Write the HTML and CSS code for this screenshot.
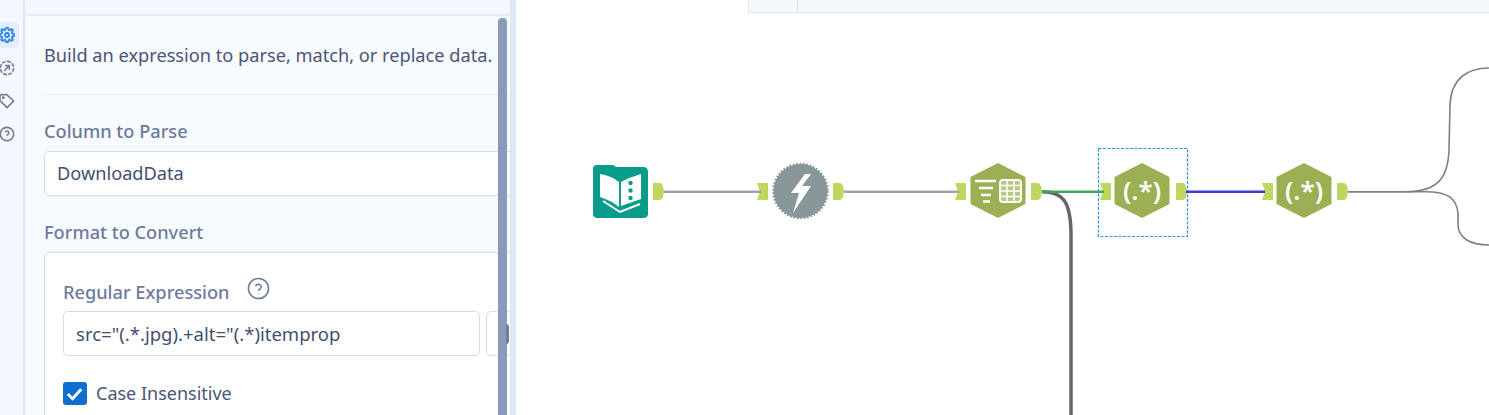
FILE: index.html
```html
<!DOCTYPE html>
<html lang="en">
<head>
    <meta charset="UTF-8">
    <title>Workflow - RegEx tool</title>
    <link rel="stylesheet" href="styles.css">
</head>
<body>
    <div class="app">
        <!-- Icon rail -->
        <nav class="rail">
            <div class="rail-btn active">
                <svg viewBox="0 0 24 24" class="rail-icon"><circle cx="12" cy="12" r="3"/><path d="M19.4 15a1.7 1.7 0 0 0 .3 1.8l.1.1a2 2 0 1 1-2.8 2.8l-.1-.1a1.7 1.7 0 0 0-2.9 1.2V21a2 2 0 1 1-4 0v-.1a1.7 1.7 0 0 0-2.9-1.2l-.1.1a2 2 0 1 1-2.8-2.8l.1-.1a1.7 1.7 0 0 0-1.2-2.9H3a2 2 0 1 1 0-4h.1a1.7 1.7 0 0 0 1.2-2.9l-.1-.1a2 2 0 1 1 2.8-2.8l.1.1a1.7 1.7 0 0 0 1.9.3H9a1.7 1.7 0 0 0 1-1.5V3a2 2 0 1 1 4 0v.1a1.7 1.7 0 0 0 2.9 1.2l.1-.1a2 2 0 1 1 2.8 2.8l-.1.1a1.7 1.7 0 0 0 1.2 2.9h.1a2 2 0 1 1 0 4h-.1a1.7 1.7 0 0 0-1.5 1z"/></svg>
            </div>
            <div class="rail-btn">
                <svg viewBox="0 0 24 24" class="rail-icon"><circle cx="12" cy="12" r="10" stroke-dasharray="6 1.800"/><path d="M8 16l7-7M9.500 8.500h6V14.500"/></svg>
            </div>
            <div class="rail-btn">
                <svg viewBox="0 0 24 24" class="rail-icon"><path d="M11.500 2.500H4Q1.500 2.500 1.500 5v6.500l10.500 10.500 10-10z"/><circle cx="6.500" cy="7" r="1"/></svg>
            </div>
            <div class="rail-btn">
                <svg viewBox="0 0 24 24" class="rail-icon"><circle cx="12" cy="12" r="10"/><path d="M9 9.500a3 3 0 0 1 5.800 1c0 2-2.800 2.300-2.800 4M12 17.500v.5"/></svg>
            </div>
        </nav>

        <!-- Config panel -->
        <section class="panel">
            <div class="panel-top"></div>
            <div class="panel-body">
                <p class="desc">Build an expression to parse, match, or replace data.</p>
                <hr class="rule">
                <div class="label">Column to Parse</div>
                <div class="field">DownloadData</div>
                <div class="label label-format">Format to Convert</div>
                <div class="card">
                    <div class="label-row">
                        <span class="label">Regular Expression</span>
                        <svg viewBox="0 0 24 24" class="help"><circle cx="12" cy="12" r="10.500"/><path d="M9 9.500a3 3 0 0 1 5.800 1c0 2-2.800 2.300-2.800 4M12 17.500v.5"/></svg>
                    </div>
                    <div class="regex-row">
                        <div class="field regex">src="(.*.jpg).+alt="(.*)itemprop</div>
                        <div class="field insert"></div>
                    </div>
                    <div class="check-row">
                        <span class="check">
                            <svg viewBox="0 0 24 24"><path d="M5 12.500l5 5 9-10"/></svg>
                        </span>
                        <span>Case Insensitive</span>
                    </div>
                </div>
            </div>
            <div class="scrollbar"></div>
            <div class="grip"></div>
        </section>

        <div class="splitter"></div>

        <!-- Workflow canvas -->
        <main class="canvas">
            <div class="toolbar">
                <div class="tool-cell"></div>
                <div class="tool-rest"></div>
            </div>
            <svg class="flow" viewBox="516 0 973 415">
                <defs>
                    <path id="out" d="M653 183h7Q662 183 663 186L664 191.500L663 197Q662 200 660 200h-7z"/>
                    <path id="in" d="M757 183h11v17h-11l3-8.500z"/>
                    <path id="hex" d="M27.500 0L55 14V41L27.500 55L0 41V14z"/>
                    <g id="regex">
                        <use href="#hex"/>
                        <text x="27.500" y="37" class="rx">(.*)</text>
                    </g>
                </defs>

                <!-- input -->
                <path class="book-bg" d="M597 165H612Q615 165 616 167H643Q648 167 648 172V214Q648 218 643 218H598Q593 218 593 214V169Q593 165 597 165z"/>
                <path class="book-w" d="M600 174Q612 176 619 182V207Q612 201 600 197z"/>
                <path class="book-w" d="M621 182Q630 177 641 174V199L621 206z"/>
                <path class="book-line" d="M603 201L620 212L640 204"/>
                <circle class="book-dot" cx="630.500" cy="183" r="2.200"/>
                <circle class="book-dot" cx="630.500" cy="190.500" r="2.200"/>
                <circle class="book-dot" cx="630.500" cy="198" r="2.200"/>
                <use href="#out" class="anchor"/>

                <!-- download -->
                <use href="#in" class="anchor"/>
                <circle cx="800.500" cy="191" r="27" class="zap-bg"/>
                <circle cx="800.500" cy="191" r="27" class="zap-edge"/>
                <path class="zap-bolt" d="M805 174L791 193H799L793 213L811 186H802L811 174z"/>
                <use href="#out" class="anchor" x="180"/>

                <!-- text to columns -->
                <use href="#in" class="anchor" x="198"/>
                <use href="#hex" class="hex" x="970.500" y="163"/>
                <path class="filter" d="M975 181H996M979 188H993M981 195H991M983 201.500H990"/>
                <rect x="1000" y="180" width="21" height="22" rx="3" class="tbl"/>
                <path class="tbl-grid" d="M1000 185.500H1021M1000 191H1021M1000 196.500H1021M1007 180V202M1014 180V202"/>
                <use href="#out" class="anchor" x="378"/>

                <!-- regex, selected -->
                <rect x="1098.500" y="148.500" width="89" height="88" class="select"/>
                <use href="#in" class="anchor" x="343"/>
                <use href="#regex" class="hex" x="1114.500" y="163"/>
                <use href="#out" class="anchor" x="523"/>

                <!-- regex -->
                <use href="#in" class="anchor" x="505"/>
                <use href="#regex" class="hex" x="1276.500" y="163"/>
                <use href="#out" class="anchor" x="684"/>

                <!-- connections -->
                <path class="wire" d="M664 191.700H761"/>
                <path class="wire" d="M844 191.700H959"/>
                <path class="wire-thick" d="M1042 191.700C1062 191.700 1071 200 1071 235V415"/>
                <path class="wire-green" d="M1042 191.700H1104"/>
                <path class="wire-blue" d="M1186 191.700H1265"/>
                <path class="wire-thin" d="M1348 191.700H1405C1438 191.700 1448 178 1449 150L1450 105C1451 78 1468 68 1489 68"/>
                <path class="wire-thin" d="M1348 191.700H1425C1448 191.700 1457 198 1458 214V224C1458 238 1470 245 1489 245"/>
            </svg>
        </main>
    </div>
</body>
</html>
```

FILE: styles.css
```css
html, body {
    margin: 0;
    height: 100%;
    overflow: hidden;
}
body {
    font-family: "Noto Sans", Arial, sans-serif;
    font-size: 18.200px;
    background-color: #ffffff;
}
.app {
    display: flex;
    height: 415px;
}

/* rail */
.rail {
    flex: 0 0 25px;
    box-sizing: border-box;
    padding-top: 22px;
    background-color: #f5f8ff;
    border-right: 2px solid #dde4f3;
    overflow: hidden;
}
.rail-btn {
    width: 20px;
    height: 33px;
    margin-left: -1px;
    display: flex;
    justify-content: center;
    padding-right: 4px;
    box-sizing: border-box;
    align-items: center;
}
.rail-btn.active {
    height: 26px;
    margin-bottom: 3px;
    background-color: #e2edff;
    border-radius: 0 4px 4px 0;
}
.rail-icon {
    width: 16px;
    height: 16px;
    flex: none;
    fill: none;
    stroke: #737d93;
    stroke-width: 2.400;
}
.active .rail-icon {
    stroke: #2f86e8;
    stroke-width: 2.800;
}

/* panel */
.panel {
    position: relative;
    width: 485px;
    flex: none;
    overflow: hidden;
    background-color: #f7faff;
}
.panel-top {
    height: 14px;
    background-color: #f4f7fd;
    border-bottom: 2px solid #e3e9f5;
}
.panel-body {
    padding: 0 0 0 19px;
    width: 520px;
}
.desc {
    margin: 0;
    padding-top: 27px;
    line-height: 25px;
    color: #4a5675;
    white-space: nowrap;
}
.rule {
    margin: 26px 0 0;
    border: none;
    border-top: 1px solid #e9eef8;
}
.label {
    color: #6d7c9c;
    font-weight: 500;
    line-height: 25px;
}
.panel-body > .label {
    margin-top: 24px;
}
.field {
    box-sizing: border-box;
    height: 45px;
    margin-top: 7px;
    padding: 0 12px;
    line-height: 43px;
    color: #434f6e;
    background-color: #ffffff;
    border: 1px solid #d3dcef;
    border-radius: 5px;
}
.card {
    margin-top: 7px;
    padding: 27px 18px 40px 18px;
    background-color: #ffffff;
    border: 1px solid #d3dcef;
    border-radius: 5px;
}
.label-row {
    display: flex;
    align-items: center;
    gap: 17px;
    height: 25px;
}
.help {
    width: 23px;
    height: 23px;
    margin-top: -9px;
    fill: none;
    stroke: #6d7c9c;
    stroke-width: 1.600;
}
.regex-row {
    display: flex;
    gap: 6px;
    margin-top: 6px;
}
.regex-row .field {
    margin-top: 0;
}
.regex {
    flex: 0 0 417px;
    font-size: 18.550px;
}
.insert {
    flex: 0 0 60px;
}
.check-row {
    display: flex;
    align-items: center;
    gap: 9px;
    margin-top: 25px;
    font-size: 18px;
    color: #4a5675;
}
.check {
    width: 24px;
    height: 23px;
    background-color: #0f6fd0;
    border-radius: 3px;
    display: flex;
}
.check svg {
    fill: none;
    stroke: #ffffff;
    stroke-width: 3;
}

/* over the panel content */
.scrollbar {
    position: absolute;
    top: 18px;
    bottom: -10px;
    left: 473px;
    width: 9px;
    background-color: #8c9aba;
    border-radius: 4px;
}
.grip {
    position: absolute;
    top: 324px;
    left: 481px;
    width: 3px;
    height: 20px;
    background-color: #6f7da0;
    border-radius: 0 3px 3px 0;
}
.splitter {
    flex: none;
    width: 6px;
    background-color: #dfe6f4;
}

/* canvas */
.canvas {
    position: relative;
    flex: 1;
    min-width: 0;
    background-color: #ffffff;
}
.toolbar {
    display: flex;
    height: 12px;
    margin-left: 232px;
    background-color: #f5f8ff;
    border-left: 1px solid #dde4f3;
    border-bottom: 1px solid #dde4f3;
}
.tool-cell {
    width: 48px;
    border-right: 1px solid #dde4f3;
}
.tool-rest {
    flex: 1;
}
.flow {
    position: absolute;
    top: 0;
    left: 0;
    width: 973px;
    height: 415px;
}
.wire, .wire-thick, .wire-green, .wire-blue, .wire-thin {
    fill: none;
}
.wire {
    stroke: #a3a3a3;
    stroke-width: 2.500;
}
.wire-thick {
    stroke: #666666;
    stroke-width: 3.500;
}
.wire-green {
    stroke: #3fa565;
    stroke-width: 2.500;
}
.wire-blue {
    stroke: #3a3ae0;
    stroke-width: 2.500;
}
.wire-thin {
    stroke: #808080;
    stroke-width: 1.600;
}
.anchor {
    fill: #bcd85f;
}
.hex {
    fill: #9bb052;
}
.rx {
    font-family: "Noto Sans", Arial, sans-serif;
    font-size: 26px;
    font-weight: 600;
    fill: #ffffff;
    text-anchor: middle;
}
.book-bg {
    fill: #0a9c8a;
}
.book-w {
    fill: #ffffff;
}
.book-line {
    fill: none;
    stroke: #ffffff;
    stroke-width: 2;
}
.book-dot {
    fill: #0a9c8a;
}
.zap-bg {
    fill: #87979a;
}
.zap-edge {
    fill: none;
    stroke: #87979a;
    stroke-width: 2.500;
    stroke-dasharray: 1.700 1.700;
}
.zap-bolt {
    fill: #ffffff;
}
.filter {
    fill: none;
    stroke: #ffffff;
    stroke-width: 2.500;
}
.tbl {
    fill: #b9c884;
    stroke: #ffffff;
    stroke-width: 2;
}
.tbl-grid {
    fill: none;
    stroke: #ffffff;
    stroke-width: 1.500;
}
.select {
    fill: none;
    stroke: #2f93e6;
    stroke-width: 1.200;
    stroke-dasharray: 3 1.500;
}
```
